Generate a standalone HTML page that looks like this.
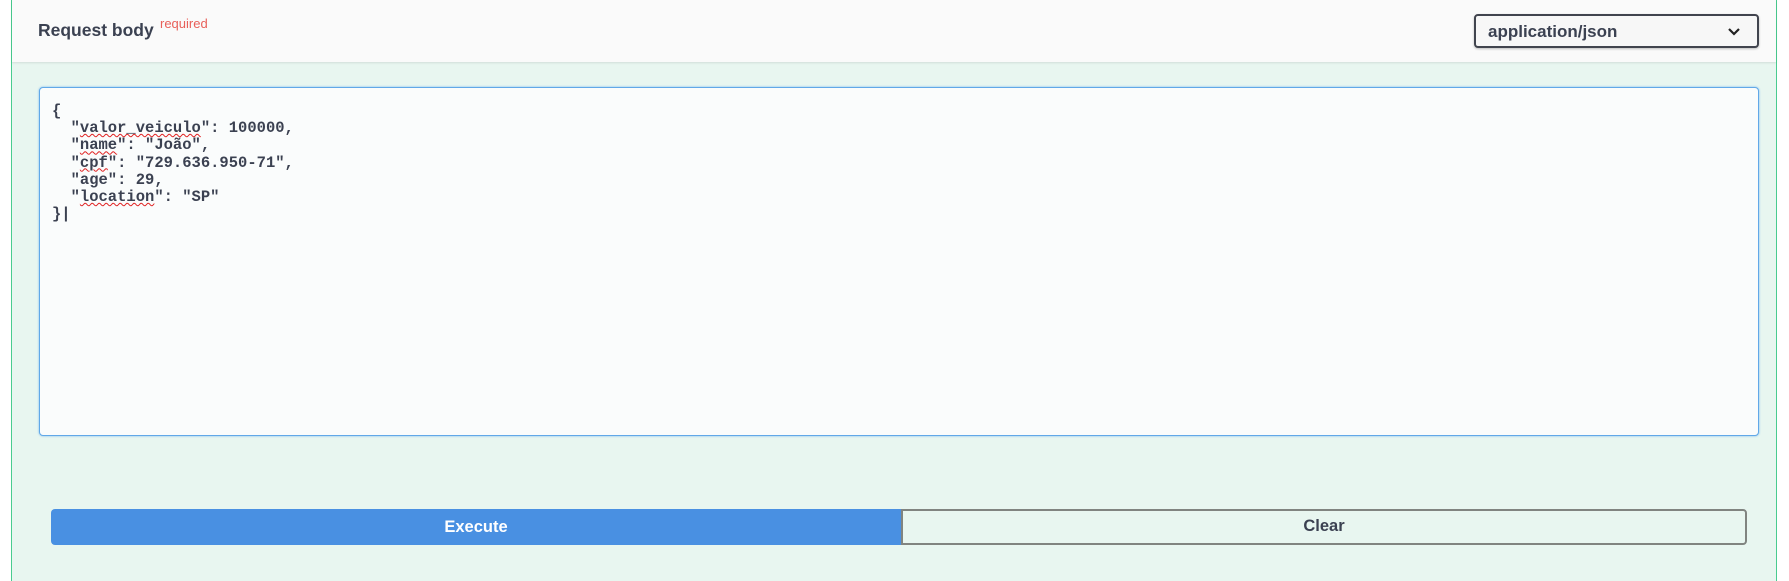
<!DOCTYPE html>
<html><head><meta charset="utf-8"><style>
*{box-sizing:border-box;margin:0;padding:0}
body{width:1789px;height:581px;overflow:hidden;background:#fff;font-family:"Liberation Sans",sans-serif;position:relative}
.wrap{position:absolute;left:11px;top:0;width:1766px;height:581px;border-left:1px solid #49cc90;border-right:1px solid #49cc90;background:#e8f6f0}
.hdr{position:absolute;left:0;top:0;right:0;height:62px;background:#fafafa;box-shadow:0 1px 2px rgba(0,0,0,.1)}
.title{position:absolute;left:26px;top:20px;font-size:17.5px;font-weight:bold;color:#3b4151}
.req{position:absolute;left:148px;top:16px;font-size:13px;color:#e8605a}
.sel{position:absolute;left:1462px;top:14px;width:285px;height:34px;border:2px solid #41444e;border-radius:4px;background:#f7f7f7;box-shadow:0 1px 2px rgba(0,0,0,.25);font-weight:bold;font-size:17px;color:#3b4151;padding:6px 0 0 12px}
.sel svg{position:absolute;right:16px;top:11px}
.ta{position:absolute;left:27px;top:87px;width:1720px;height:349px;border:1px solid #61a8e8;border-radius:4px;background:#fafcfc;box-shadow:0 0 2px #79b8ee}
pre{position:absolute;left:12px;top:15px;font-family:"Liberation Mono","DejaVu Sans Mono",monospace;font-weight:bold;font-size:15.5px;line-height:17.2px;color:#3b4151}
.sp{text-decoration:underline wavy #e02020;text-decoration-thickness:1px}
.btn{position:absolute;top:509px;height:36px;font-weight:bold;font-size:16.5px;text-align:center}
.ex{left:39px;width:850px;background:#4990e2;color:#fff;border-radius:4px 0 0 4px;line-height:36px}
.cl{left:889px;width:846px;border:2px solid #808480;color:#3b4151;border-radius:0 4px 4px 0;line-height:31px}
</style></head><body>
<div class="wrap">
<div class="hdr"><div class="title">Request body</div><div class="req">required</div>
<div class="sel">application/json<svg width="14" height="10" viewBox="0 0 14 10"><path d="M2 2l5 5 5-5" stroke="#222" stroke-width="2.2" fill="none"/></svg></div></div>
<div class="ta"><pre>{
  "<span class="sp">valor_veiculo</span>": 100000,
  "<span class="sp">name</span>": "João",
  "<span class="sp">cpf</span>": "729.636.950-71",
  "age": 29,
  "<span class="sp">location</span>": "SP"
}|</pre></div>
<div class="btn ex">Execute</div><div class="btn cl">Clear</div>
</div>
</body></html>
